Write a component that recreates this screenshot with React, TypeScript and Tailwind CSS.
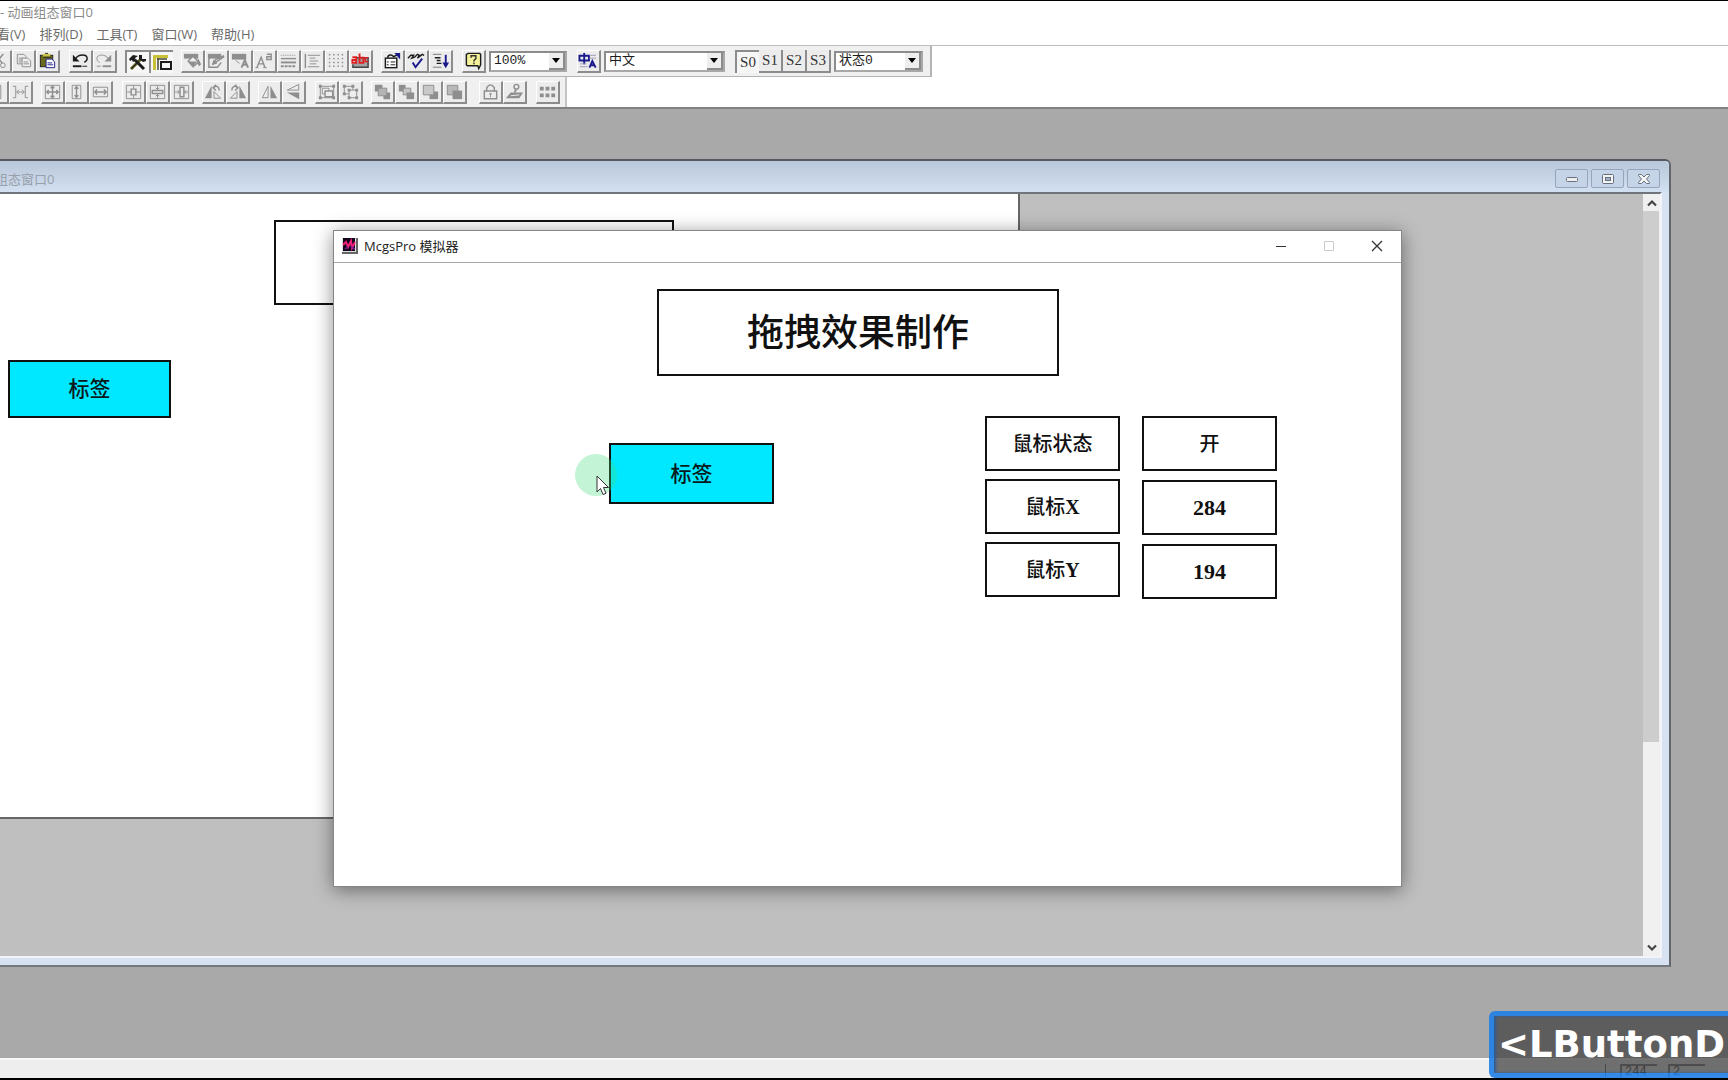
import React from "react";

const UI = "font-['Open_Sans','Noto_Sans_CJK_SC',sans-serif]";
const SONG = "font-['Liberation_Serif','Noto_Sans_CJK_SC',serif]";

const G = "#8e8e8e";
const K = "#1c1c1c";
const B = "#1a1a8c";

const line = (d: string, stroke = G, w = 1) => (
  <path d={d} fill="none" stroke={stroke} strokeWidth={w} />
);
const fill = (d: string, color = G) => <path d={d} fill={color} />;

const icons: Record<string, React.ReactNode> = {
  cut: (
    <>
      {line("M7 4l8 10M16 4L8 14", G, 1.5)}
      <circle cx="6.500" cy="16" r="2.500" fill="none" stroke={G} />
      <circle cx="15.500" cy="16" r="2.500" fill="none" stroke={G} />
    </>
  ),
  copy: (
    <>
      {line("M5.500 4.500h7l2 2v8h-9z")}
      {line("M7 8.500h5M7 10.500h5M7 12.500h3")}
      <path d="M10.500 8.500h6l3 3v6h-9z" fill="#f0f0f0" stroke={G} />
      {line("M12 12.500h5M12 14.500h6")}
    </>
  ),
  paste: (
    <>
      <rect x="4.500" y="5.500" width="13" height="12" fill="#6b6b1e" stroke="#222" />
      {fill("M7 4h8v3H7z", "#c9c24a")}
      {line("M7.500 7.500h8M9.500 3.500h3", "#222")}
      <path d="M10.500 9.500h6l3 3v6h-9z" fill="#fff" stroke={B} />
      {line("M12 13.500h5M12 15.500h6", B)}
    </>
  ),
  undo: (
    <>
      {line("M7 9c3-5 12-5 12 0 0 2-1 3-3 4", K, 1.5)}
      {fill("M4 5v7h7z", K)}
      {line("M4 17h9", K, 2)}
      {line("M14 17h5", K, 1)}
    </>
  ),
  redo: (
    <>
      {line("M16 9c-3-5-12-5-12 0 0 2 1 3 3 4", G)}
      {fill("M19 5v7h-7z")}
      {line("M4 17h4", G)}
      {line("M10 17h9", G, 2)}
    </>
  ),
  tools: (
    <>
      {line("M5 18L15 8", "#5d5a20", 3)}
      {line("M9 9l9 9", K, 3)}
      {fill("M3 8l4-4 5 1-3 2 1 2-3 2-1-2-2 1z", K)}
      {fill("M13 4l3 0v4h4l0 2-3 1-4-3z", K)}
      {line("M5 18L11 12", K)}
    </>
  ),
  frame: (
    <>
      {line("M3 5.500h15M4.500 4v15", "#c9c13a", 3)}
      {line("M7 8h10M8 7v12", "#4a4a3a", 1.5)}
      <rect x="11" y="11" width="10" height="7" fill="#f4f4f4" stroke={K} strokeWidth="2" />
    </>
  ),
  bucket: (
    <>
      {fill("M3 4h15v5H3z")}
      <path d="M7.500 11.500l5-5 6 6-6 5z" fill="#eee" stroke={G} strokeWidth="1.500" />
      {fill("M7 12h10l-4 5zM18 9l3 6-2 2-2-3z")}
    </>
  ),
  pen: (
    <>
      {fill("M3 4h14v5H3z")}
      {line("M4 8v10h9l4-5", G, 1.500)}
      {line("M8 15l3-5 9-4M11 13l9-6", G, 1.500)}
      {fill("M7 16l2-6 4 4z")}
    </>
  ),
  fontcolor: (
    <>
      {fill("M3 4h15v6H3z")}
      {line("M13 18.500l3.500-8 3.500 8M14 15.500h5", G, 2)}
      {line("M7 11l4 3")}
    </>
  ),
  fontsize: (
    <>
      {line("M4 18.500L8.500 7.500l4 11M5.500 14.500h6", G, 1.500)}
      {line("M14.500 4.500h4.500v5.500h-4.500v-3h4", G, 1.500)}
      {line("M2.500 18.500h3M10.500 18.500h4")}
    </>
  ),
  linestyle: (
    <>
      <path d="M4 5.500h16" stroke={G} strokeDasharray="1 1" />
      {line("M4 9h16", G, 1.500)}
      {line("M4 13h16", G, 2)}
      <path d="M4 17h16" stroke={G} strokeWidth="2" strokeDasharray="3 1" />
    </>
  ),
  spacing: (
    <>
      {line("M4.500 4v15", G, 1.500)}
      {line("M7 5.500h13M9 8.500h6M9 11.500h9M9 14.500h7M7 17.500h12", G, 1)}
    </>
  ),
  dots: (
    <>
      {[4, 8, 12, 16].map((y) => (
        <path key={y} d={`M4 ${y + 1}h15`} stroke={G} strokeWidth="1.500" strokeDasharray="1.500 3" />
      ))}
    </>
  ),
  ab: (
    <>
      <path d="M8 8h12v10H4v-3" fill="#a3a3a3" stroke="#444" strokeWidth="1.500" />
      <path d="M3.500 7.500h4v6h-4v-3h4M11 3.500v10h4V8h-4" fill="none" stroke="#e02020" strokeWidth="2" />
      {line("M20 8h-3v4h3", "#e02020", 1.500)}
    </>
  ),
  props: (
    <>
      <rect x="4.500" y="8.500" width="12" height="10" fill="#fff" stroke={K} strokeWidth="1.500" />
      {line("M6 12.500h2M10 12.500h5M6 15.500h2M10 15.500h5", K)}
      {line("M7 8c0-3 4-4 6-1l4-2", K, 1.500)}
      {fill("M14 3h6v7z", B)}
    </>
  ),
  check: (
    <>
      {line("M3 8.500l3-3h3l-2 3 3-1 3-3 2 1-2 3 5-4 2 1", K, 1.500)}
      {line("M8 13l3 5 7-9", B, 2)}
    </>
  ),
  listdown: (
    <>
      {line("M4 4.500h9M4 18h9", "#777", 1)}
      {line("M6 8h6M8 11h4M8 14h5", K, 1.500)}
      {line("M17.500 5v11", B, 2)}
      {fill("M14 13h7l-3.500 6z", B)}
    </>
  ),
  help: (
    <>
      <path d="M4.500 4.500l2-1h12l1 1v11l-2 4-1-3h-11l-1-1z" fill="#f4f19a" stroke={K} strokeWidth="1.500" />
      {line("M9.500 8V6h5v3l-2 2v1M12.500 13v2", "#333", 1.500)}
    </>
  ),
  lang: (
    <>
      {line("M2.500 6h10v5h-10zM7.500 3v12", B, 2)}
      {line("M13 5.500h7M13 8.500h7M3 14.500h7M3 17.500h8", "#9a9ab8")}
      {line("M13 18.500l3-7 3.500 7M14 16h5", B, 2)}
    </>
  ),
  hspace: (
    <>
      {line("M4 5.500h3v12H4M20 5.500h-3v12h3")}
      {line("M8 11.500h8M10.500 9L8 11.500l2.500 2.500M13.500 9l2.500 2.500-2.500 2.500")}
    </>
  ),
  sizeboth: (
    <>
      {line("M4.500 4.500h15v14h-15z")}
      {line("M6 11.500h12M12 6v11M8 9.500l-2 2 2 2M16 9.500l2 2-2 2M10 7.500l2-2 2 2M10 15.500l2 2 2-2", G, 1.5)}
    </>
  ),
  sizeh: (
    <>
      {line("M7.500 4.500h9v14h-9z")}
      {line("M12 6v11M10 8l2-2 2 2M10 15l2 2 2-2", G, 1.5)}
    </>
  ),
  sizew: (
    <>
      {line("M4.500 6.500h15v10h-15z")}
      {line("M6 11.500h12M8.500 9L6 11.500 8.500 14M15.500 9l2.500 2.500-2.500 2.500", G, 1.5)}
    </>
  ),
  center: (
    <>
      {line("M4.500 4.500h15v14h-15z")}
      {line("M9.500 8.500h5v6h-5z", G, 1.5)}
      {line("M5 11.500h4M15 11.500h4M12 5v3M12 15v3")}
    </>
  ),
  centerv: (
    <>
      {line("M4.500 4.500h15v14h-15z")}
      {line("M6.500 10h11v3h-11z", G, 1.5)}
      {line("M12 5v4M12 13v5M10 7l2 2 2-2M10 16l2-2 2 2")}
    </>
  ),
  centerh: (
    <>
      {line("M4.500 4.500h15v14h-15z")}
      {line("M10.500 6.500h4v10h-4z", G, 1.5)}
      {line("M5 11.500h5M15 11.500h4M8 9.500l2 2-2 2M17 9.500l-2 2 2 2")}
    </>
  ),
  rotl: (
    <>
      {fill("M3 18L10 5v13z")}
      {line("M12.500 18v-7l7 7z")}
      {line("M12 7c3-3 6-1 6 3M14.500 4l-3 3 3 3", G, 1.5)}
    </>
  ),
  rotr: (
    <>
      {fill("M21 18L14 5v13z")}
      {line("M11.500 18v-7l-7 7z")}
      {line("M12 7c-3-3-6-1-6 3M9.500 4l3 3-3 3", G, 1.5)}
    </>
  ),
  fliph: (
    <>
      {line("M10.500 5.500v12h-6z")}
      {fill("M13 5v13h7z")}
    </>
  ),
  flipv: (
    <>
      {line("M17.500 3.500v6h-12z")}
      {fill("M5 12h13v7z")}
    </>
  ),
  group: (
    <>
      {line("M5.500 5.500h14v12h-14z")}
      <path d="M7.500 7.500h7v6h-7z" fill="#eee" stroke={G} />
      <path d="M10.500 10.500h8v6h-8z" fill="#eee" stroke={G} strokeWidth="1.500" />
      {fill("M4 4h3v3H4zM18 4h3v3h-3zM4 16h3v3H4zM18 16h3v3h-3z")}
    </>
  ),
  ungroup: (
    <>
      {line("M5.500 5.500h9v8h-9z")}
      <path d="M10.500 9.500h8v8h-8z" fill="#eee" stroke={G} />
      {fill("M4 4h3v3H4zM13 4h3v3h-3zM4 12h3v3H4zM9 8h3v3H9zM17 8h3v3h-3zM9 16h3v3H9zM17 16h3v3h-3z")}
    </>
  ),
  front: (
    <>
      {fill("M4 4h8v7H4zM13 12h7v7h-7z")}
      <path d="M7.500 7.500h9v8h-9z" fill="#b4b4b4" stroke={G} />
    </>
  ),
  forward: (
    <>
      {fill("M4 4h7v7H4z")}
      <path d="M8.500 7.500h8v7h-8z" fill="#c4c4c4" stroke={G} />
      {fill("M12 12h8v7h-8z")}
    </>
  ),
  backward: (
    <>
      {fill("M11 11h9v8h-9z")}
      <path d="M4.500 4.500h11v10h-11z" fill="#c8c8c8" stroke={G} />
    </>
  ),
  back: (
    <>
      <path d="M4.500 4.500h11v10h-11z" fill="#b8b8b8" stroke={G} />
      {fill("M10 10h10v9H10z")}
    </>
  ),
  lock: (
    <>
      {line("M5.500 10.500h13v8h-13zM8 10V7q4-6 8 0v3", G, 1.5)}
      {line("M12 13v4M10.500 13.500h3")}
    </>
  ),
  anchor: (
    <>
      <circle cx="14" cy="6" r="2.500" fill="none" stroke={G} strokeWidth="1.500" />
      {line("M13.500 8l-1 4", G, 2)}
      {fill("M3 18l5-6h13l-4 6z")}
      {line("M8 15.500l9-1", "#eee")}
    </>
  ),
  grid: <>{fill("M4 6h4v4H4zM10 6h4v4h-4zM16 6h4v4h-4zM4 13h4v4H4zM10 13h4v4h-4zM16 13h4v4h-4z")}</>,
};

function ToolButton({ name, pressed }: { name: string; pressed?: boolean }) {
  return (
    <button
      type="button"
      aria-label={name}
      className={
        pressed
          ? "h-[23px] w-6 shrink-0 border-t-2 border-l-2 border-t-[#8c8c8c] border-l-[#8c8c8c] bg-[#f6f6f6]"
          : "h-[23px] w-6 shrink-0 border-t border-r-2 border-b-2 border-l border-t-white border-r-[#8c8c8c] border-b-[#8c8c8c] border-l-white bg-[#ececec]"
      }
    >
      <svg viewBox="1 1 22 21" className="block h-full w-full">
        {icons[name]}
      </svg>
    </button>
  );
}

function Group({ names, pressed, className = "ml-2" }: { names: string[]; pressed?: boolean; className?: string }) {
  return (
    <div className={`flex shrink-0 ${className}`}>
      {names.map((n) => (
        <ToolButton key={n} name={n} pressed={pressed} />
      ))}
    </div>
  );
}

function Combo({ label, value, className }: { label: string; value: string; className: string }) {
  return (
    <div className={`relative ml-[3px] h-[21px] shrink-0 border-2 border-t-[#8c8c8c] border-r-[#a8a8a8] border-b-[#a8a8a8] border-l-[#8c8c8c] bg-white ${className}`}>
      <select
        aria-label={label}
        className="block h-full w-full appearance-none bg-transparent pl-[3px] font-['Liberation_Mono','Noto_Sans_CJK_SC',monospace] text-[13px] leading-4 text-[#1c1c1c]"
      >
        <option>{value}</option>
      </select>
      <span className="pointer-events-none absolute inset-y-0 right-0 flex w-4 items-center justify-center border-r-2 border-b-2 border-[#8c8c8c] bg-[#eee]">
        <svg viewBox="0 0 8 5" className="h-[5px] w-2">
          <path d="M0 0h8L4 5z" fill="#000" />
        </svg>
      </span>
    </div>
  );
}

function StateButton({ label, pressed }: { label: string; pressed?: boolean }) {
  return (
    <button
      type="button"
      className={
        pressed
          ? "h-[23px] w-6 border-t-2 border-l-2 border-[#8c8c8c] bg-[#f6f6f6] text-[#333]"
          : "h-[23px] w-6 border-r-2 border-b-2 border-[#8c8c8c] bg-[#ececec] text-[#333]"
      }
    >
      {label}
    </button>
  );
}

function Tag({ className }: { className: string }) {
  return (
    <button
      type="button"
      className={`absolute flex items-center justify-center border-2 border-[#111] bg-[#00e8ff] text-[21px] leading-6 font-medium text-[#0a1a1c] ${SONG} ${className}`}
    >
      标签
    </button>
  );
}

const cell = "flex h-[55px] w-[135px] items-center justify-center border-2 border-[#111] leading-6";

function MdiButton({ label, children }: { label: string; children: React.ReactNode }) {
  return (
    <button
      type="button"
      aria-label={label}
      className="flex h-[19px] w-[33px] items-center justify-center rounded-[2px] border border-[#94a5bd] bg-[#c5d4e6]"
    >
      <svg viewBox="0 0 14 12" className="h-3 w-3.5">
        {children}
      </svg>
    </button>
  );
}

function ChildWindow() {
  return (
    <section className="absolute top-[50px] right-[57px] bottom-[91px] left-0 flex flex-col rounded-tr-md border-t-2 border-r-2 border-b-2 border-t-[#56595f] border-r-[#63666c] border-b-[#75787e] bg-[#d6e2f2]">
      <header className="flex h-[31px] shrink-0 items-center justify-between rounded-tr-md bg-linear-to-b from-[#b9c7da] to-[#d3e0f1] pt-1 pr-[9px]">
        <h2 className={`-ml-[5px] text-[13px] leading-5 whitespace-nowrap text-[#97a0ab] ${UI}`}>组态窗口0</h2>
        <div className="flex gap-[3px]">
          <MdiButton label="最小化">
            <rect x="1.500" y="4.500" width="11" height="4" rx="1" fill="#eee" stroke="#66707f" />
          </MdiButton>
          <MdiButton label="还原">
            <rect x="1.500" y="1.500" width="11" height="9" rx="1" fill="#f4f4f4" stroke="#66707f" />
            <rect x="4.500" y="4.500" width="5" height="3" fill="#9fb0c8" stroke="#66707f" />
          </MdiButton>
          <MdiButton label="关闭">
            <path d="M1.500 1.500h3L7 4l2.500-2.500h3v1L9.500 6l3 3.500v1h-3L7 8l-2.500 2.500h-3v-1l3-3.500-3-3.500z" fill="#f4f4f4" stroke="#66707f" />
          </MdiButton>
        </div>
      </header>
      <div className="mr-[7px] mb-[7px] flex min-h-0 flex-1 border-t-2 border-r-2 border-b-2 border-t-[#70757c] border-r-[#f2f4f8] border-b-[#f2f4f8] bg-[#bfbfbf]">
        <div className="relative min-w-0 flex-1">
          <div className="absolute top-0 left-0 h-[625px] w-[1020px] border-r-2 border-b-2 border-[#666] bg-white">
            <div className="absolute top-[26px] left-[274px] h-[85px] w-[400px] border-2 border-[#111]" />
            <Tag className="top-[166px] left-2 h-[58px] w-[163px]" />
          </div>
        </div>
        <div className="flex w-[17px] flex-col items-center bg-[#f0f0f0]">
          <button type="button" aria-label="向上滚动" className="flex h-[17px] w-full items-center justify-center">
            <svg viewBox="0 0 10 8" className="h-2 w-2.5">
              <path d="M1 6.500l4-4 4 4" fill="none" stroke="#444" strokeWidth="2.200" />
            </svg>
          </button>
          <div className="w-full flex-1 pr-px">
            <div className="h-[73%] bg-[#cdcdcd]" />
          </div>
          <button type="button" aria-label="向下滚动" className="flex h-[17px] w-full items-center justify-center">
            <svg viewBox="0 0 10 8" className="h-2 w-2.5">
              <path d="M1 1.500l4 4 4-4" fill="none" stroke="#444" strokeWidth="2.200" />
            </svg>
          </button>
        </div>
      </div>
    </section>
  );
}

function Simulator() {
  return (
    <section className="absolute top-[121px] left-[333px] flex h-[657px] w-[1069px] flex-col border border-[#868686] bg-white shadow-[0_3px_18px_rgba(0,0,0,0.45)]">
      <header className="flex h-8 shrink-0 items-center border-b border-[#a6a6a6] pb-0.5 pl-2">
        <svg viewBox="0 0 16 16" className="h-4 w-4">
          <rect width="16" height="16" fill="#666" />
          <rect width="14" height="14" fill="#ddd" />
          <rect x="1" y="0" width="12" height="13" fill="#12051c" />
          <path d="M1 7l3-3 2 5 3-6 1 7 3-6" fill="none" stroke="#f0207a" strokeWidth="2" />
          <path d="M3 11l3-2M9 9l4 2" stroke="#7a1f9c" strokeWidth="1.500" />
        </svg>
        <h1 className={`ml-[6px] flex-1 text-[13px] leading-5 text-[#222] ${UI}`}>McgsPro 模拟器</h1>
        <button type="button" aria-label="最小化" className="flex h-full w-12 items-center justify-center">
          <svg viewBox="0 0 12 12" className="h-3 w-3"><path d="M1 6.500h10" stroke="#333" /></svg>
        </button>
        <button type="button" aria-label="最大化" disabled className="flex h-full w-12 items-center justify-center">
          <svg viewBox="0 0 12 12" className="h-3 w-3"><path d="M1.500 1.500h9v9h-9z" fill="none" stroke="#ccc" /></svg>
        </button>
        <button type="button" aria-label="关闭" className="flex h-full w-12 items-center justify-center">
          <svg viewBox="0 0 12 12" className="h-3 w-3"><path d="M1 1l10 10M11 1L1 11" stroke="#333" strokeWidth="1.300" /></svg>
        </button>
      </header>
      <div className={`relative flex-1 text-[#111] ${SONG}`}>
        <div className="absolute top-[26px] left-[323px] flex h-[87px] w-[402px] items-center justify-center border-2 border-[#111] pt-0.5 text-[37px] leading-10 font-medium">
          拖拽效果制作
        </div>
        <Tag className="top-[180px] left-[275px] h-[61px] w-[165px]" />
        <div className="absolute top-[153px] left-[651px] flex gap-[22px]">
          <div className="flex flex-col gap-2 text-[20px] font-medium">
            <div id="state" className={cell}>鼠标状态</div>
            <div id="mx" className={cell}>鼠标<b>X</b></div>
            <div id="my" className={cell}>鼠标<b>Y</b></div>
          </div>
          <div className="flex flex-col gap-[9px]">
            <output aria-labelledby="state" className={`${cell} text-[20px] font-medium`}>开</output>
            <output aria-labelledby="mx" className={`${cell} text-[22px] font-bold`}>284</output>
            <output aria-labelledby="my" className={`${cell} text-[22px] font-bold`}>194</output>
          </div>
        </div>
        <div className="absolute top-[191px] left-[241px] size-[42px] rounded-full bg-[#3cdc78]/30" />
        <svg viewBox="0 0 14 21" className="absolute top-[212px] left-[262px] h-[21px] w-3.5">
          <path d="M1 1v16l3.500-3.500 2.500 6 3-1.200-2.500-5.800h5z" fill="#fff" stroke="#333" />
        </svg>
      </div>
    </section>
  );
}

export default function App() {
  return (
    <div className={`relative flex h-screen min-h-[900px] flex-col overflow-hidden border-t border-b-2 border-black bg-white ${UI}`}>
      <div className="h-[22px] shrink-0 text-[13px] leading-[22px] whitespace-nowrap text-[#8c8c8c]">- 动画组态窗口0</div>
      <nav className="flex h-[22px] shrink-0 text-[13px] leading-[22px] whitespace-nowrap text-[#6a6a6a]">
        <div className="-ml-[3px] flex gap-[14px]">
          <button type="button">看(V)</button>
          <button type="button">排列(D)</button>
          <button type="button">工具(T)</button>
          <button type="button">窗口(W)</button>
          <button type="button">帮助(H)</button>
        </div>
      </nav>
      <div className="shrink-0 border-t border-[#bdbdbd]">
        <div className="flex h-[31px] w-[932px] items-center border-r-2 border-b border-[#b4b4b4] bg-[#f0f0f0]">
          <Group names={["cut", "copy", "paste"]} className="-ml-3" />
          <Group names={["undo", "redo"]} className="ml-[9px]" />
          <Group names={["tools", "frame"]} pressed />
          <Group names={["bucket", "pen", "fontcolor", "fontsize", "linestyle", "spacing", "dots", "ab"]} />
          <Group names={["props", "check", "listdown"]} />
          <Group names={["help"]} className="ml-[9px]" />
          <Combo label="缩放" value="100%" className="w-[78px]" />
          <Group names={["lang"]} className="ml-[10px]" />
          <Combo label="语言" value="中文" className="w-[121px]" />
          <div className="ml-[10px] flex font-['Liberation_Serif',serif] text-[15px] leading-5">
            <StateButton label="S0" pressed />
            <StateButton label="S1" />
            <StateButton label="S2" />
            <StateButton label="S3" />
          </div>
          <Combo label="状态" value="状态0" className="w-[89px]" />
        </div>
        <div className="flex h-[30px] w-[567px] items-center border-r-2 border-[#c4c4c4] bg-[#f0f0f0]">
          <Group names={["sizeh", "hspace"]} className="-ml-[15px]" />
          <Group names={["sizeboth", "sizeh", "sizew"]} />
          <Group names={["center", "centerv", "centerh"]} className="ml-[9px]" />
          <Group names={["rotl", "rotr"]} />
          <Group names={["fliph", "flipv"]} />
          <Group names={["group", "ungroup"]} className="ml-[9px]" />
          <Group names={["front", "forward", "backward", "back"]} />
          <Group names={["lock", "anchor"]} className="ml-3" />
          <Group names={["grid"]} className="ml-[9px]" />
        </div>
      </div>
      <main className="relative min-h-0 flex-1 border-t-2 border-[#828282] bg-[#a9a9a9]">
        <ChildWindow />
        <Simulator />
      </main>
      <footer className="flex h-5 shrink-0 items-end justify-end gap-[11px] border-t-2 border-[#f8f8f8] bg-[#eee] pr-[23px] font-['Liberation_Mono',monospace] text-[12px] leading-3 text-[#222]">
        <span className="h-[14px] w-1 border-l border-[#555]" />
        <span className="h-[14px] w-[37px] border-t-2 border-l-2 border-[#666] pl-[3px]">244</span>
        <span className="h-[14px] w-[37px] border-t-2 border-l-2 border-[#666] pl-[3px]">2</span>
      </footer>
      <div className="absolute right-0 bottom-0 flex h-[67px] w-[239px] items-center rounded-l-md border-y-[5px] border-l-[5px] border-[#1f7fe6]/90 bg-[#454446]/75 bg-clip-padding pl-1 font-['DejaVu_Sans',sans-serif] text-[37px] leading-10 font-bold text-white shadow-[inset_2px_0_3px_#2b5a94]">
        &lt;LButtonD
      </div>
    </div>
  );
}
